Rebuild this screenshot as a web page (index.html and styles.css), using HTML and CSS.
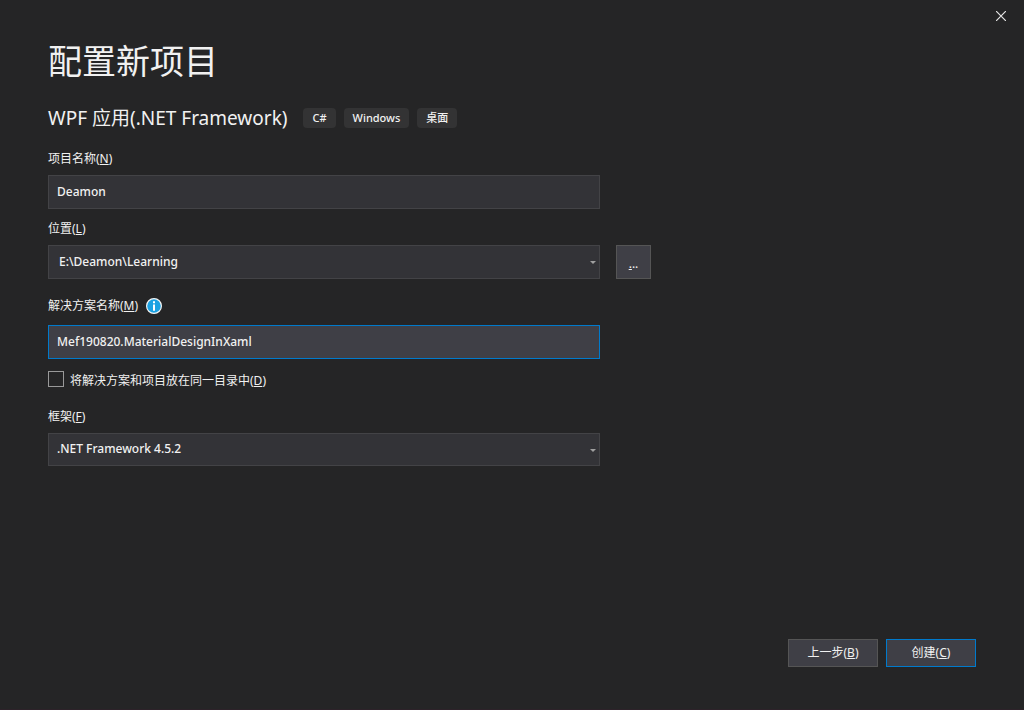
FILE: index.html
```html
<!DOCTYPE html>
<html lang="zh-CN">
<head>
<meta charset="utf-8">
<title>配置新项目</title>
<link rel="stylesheet" href="styles.css">
</head>
<body>
<form class="dialog">
  <div class="titlebar">
    <button type="button" class="close" aria-label="关闭">
      <svg width="10" height="10" viewBox="0 0 10 10"><path d="M0 0L10 10M10 0L0 10" stroke="#e6e6e6" stroke-width="1.2"/></svg>
    </button>
  </div>
  <main class="content">
    <h1 class="title">配置新项目</h1>
    <div class="template">
      <h2 class="template-name">WPF 应用(.NET Framework)</h2>
      <ul class="tags">
        <li class="tag">C#</li>
        <li class="tag">Windows</li>
        <li class="tag">桌面</li>
      </ul>
    </div>

    <div class="field">
      <label class="label" for="name">项目名称(<u>N</u>)</label>
      <input class="box" id="name" type="text" value="Deamon">
    </div>

    <div class="field">
      <label class="label" for="location">位置(<u>L</u>)</label>
      <div class="row">
        <div class="select">
          <select class="box box-path" id="location"><option>E:\Deamon\Learning</option></select>
          <svg class="arrow" width="6" height="3" viewBox="0 0 6 3"><path d="M0 0H6L3 3Z" fill="#a0a0a0"/></svg>
        </div>
        <button type="button" class="button browse" aria-label="浏览"><u>.</u>..</button>
      </div>
    </div>

    <div class="field field-solution">
      <div class="label-row">
        <label class="label" for="solution">解决方案名称(<u>M</u>)</label>
        <svg class="info" width="16" height="16" viewBox="0 0 16 16"><circle cx="8" cy="8" r="7.4" fill="#1ba1e2" stroke="#f4f4f4" stroke-width="1.2"/><path d="M7 3.2h2v2H7zM7 6.4h2v6.4H7z" fill="#fff"/></svg>
      </div>
      <input class="box box-active" id="solution" type="text" value="Mef190820.MaterialDesignInXaml">
    </div>

    <div class="check-row">
      <input class="check" id="same" type="checkbox">
      <label class="check-label" for="same">将解决方案和项目放在同一目录中(<u>D</u>)</label>
    </div>

    <div class="field">
      <label class="label" for="framework">框架(<u>F</u>)</label>
      <div class="select">
        <select class="box box-short" id="framework"><option>.NET Framework 4.5.2</option></select>
        <svg class="arrow" width="6" height="3" viewBox="0 0 6 3"><path d="M0 0H6L3 3Z" fill="#a0a0a0"/></svg>
      </div>
    </div>
  </main>
  <footer class="footer">
    <button type="button" class="button">上一步(<u>B</u>)</button>
    <button type="submit" class="button button-primary">创建(<u>C</u>)</button>
  </footer>
</form>
</body>
</html>
```
FILE: styles.css
```css
* {
  box-sizing: border-box;
}

body {
  margin: 0;
  background: #252526;
  color: #f1f1f1;
  font: 400 12px/16px "Noto Sans", "Noto Sans CJK SC", sans-serif;
}

input,
select,
button {
  font: inherit;
  color: inherit;
}

u {
  text-decoration-thickness: 1px;
  text-underline-offset: 1px;
}

.dialog {
  display: flex;
  flex-direction: column;
  min-height: 100vh;
  border-bottom: 1px solid #2d2229;
}

.titlebar {
  display: flex;
  justify-content: flex-end;
  height: 32px;
}

.close {
  display: grid;
  place-items: center;
  width: 46px;
  padding: 0;
  border: 0;
  background: none;
}

.content {
  flex: 1;
  padding: 7px 48px 0;
}

.title {
  margin: 0;
  font-size: 34px;
  font-weight: 400;
  line-height: 44px;
}

.template {
  display: flex;
  align-items: center;
  gap: 16px;
  margin: 21px 0 19px;
}

.template-name {
  margin: 0;
  font-size: 19px;
  font-weight: 400;
  line-height: 28px;
}

.tags {
  display: flex;
  gap: 8px;
  margin: 0;
  padding: 0;
  list-style: none;
}

.tag {
  padding: 2px 9px;
  border-radius: 4px;
  background: #333334;
  font-size: 11px;
  font-weight: 500;
}

.field {
  max-width: 552px;
  margin-bottom: 12px;
}

.field-solution {
  margin: 19px 0 12px;
}

.label {
  display: block;
  margin-bottom: 8px;
}

.label-row {
  display: flex;
  gap: 8px;
  margin-bottom: 3px;
}

.box {
  display: block;
  width: 100%;
  height: 34px;
  padding: 0 8px 1px;
  border: 1px solid #434346;
  border-radius: 0;
  background: #333337;
  font-weight: 500;
  outline: 0;
  appearance: none;
}

.box-path {
  padding-left: 10px;
}

.box-short {
  height: 33px;
}

.box-active {
  border-color: #007acc;
  background: #3f3f46;
}

.row {
  display: flex;
  gap: 16px;
}

.select {
  position: relative;
  flex: 0 0 100%;
}

.arrow {
  position: absolute;
  top: 16px;
  right: 4px;
  pointer-events: none;
}

.button {
  width: 90px;
  height: 28px;
  padding: 0;
  border: 1px solid #555555;
  background: #3f3f46;
}

.browse {
  flex: none;
  width: 35px;
  height: 34px;
  padding-top: 3px;
}

.button-primary {
  border-color: #007acc;
}

.check-row {
  display: flex;
  align-items: flex-start;
  gap: 6px;
  margin-bottom: 20px;
}

.check {
  width: 16px;
  height: 16px;
  margin: 0;
  border: 1px solid #999999;
  appearance: none;
}

.check-label {
  padding-top: 2px;
}

.footer {
  display: flex;
  justify-content: flex-end;
  gap: 8px;
  padding: 0 48px 42px;
}
```
